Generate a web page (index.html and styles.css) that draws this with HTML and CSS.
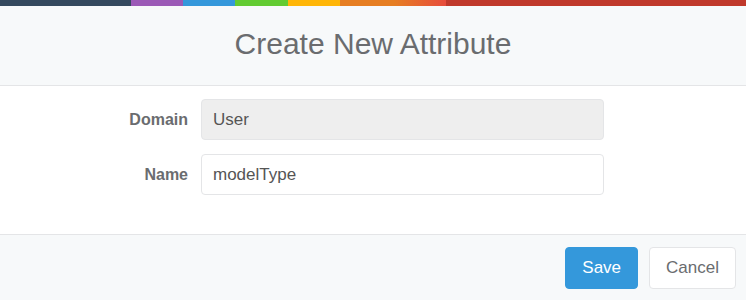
FILE: index.html
```html
<!DOCTYPE html>
<html>
<head>
    <title>Create New Attribute</title>
    <meta name="viewport" content="width=device-width, initial-scale=1">
    <link rel="stylesheet" href="styles.css">
</head>
<body>

<div class="modal">
    <div class="color-line"></div>
    <div class="modal-header">
        <h4 class="modal-title">Create New Attribute</h4>
    </div>
    <div class="modal-body">
        <div class="form-row">
            <label class="form-label">Domain</label>
            <input type="text" class="form-input" value="User" disabled>
        </div>
        <div class="form-row">
            <label class="form-label">Name</label>
            <input type="text" class="form-input" value="modelType">
        </div>
    </div>
    <div class="modal-footer">
        <button class="btn btn-primary">Save</button>
        <button class="btn btn-default">Cancel</button>
    </div>
</div>

</body>
</html>
```

FILE: styles.css
```css
html, body {
    margin: 0px;
    padding: 0px;
    background-color: #ffffff;
    font-family: "Liberation Sans", Arial, sans-serif;
    color: #6a6c6f;
}

.color-line {
    height: 6px;
    background: linear-gradient(to right,
        #34495e 0px, #34495e 131px,
        #9b59b6 131px, #9b59b6 183px,
        #3498db 183px, #3498db 235px,
        #62cb31 235px, #62cb31 288px,
        #ffb606 288px, #ffb606 340px,
        #e67e22 340px, #e67e22 394px,
        #e74c3c 446px,
        #c0392b 446px, #c0392b 100%);
}

.modal-header {
    background-color: #f7f9fa;
    border-bottom: 1px solid #e4e5e7;
    padding: 21px 0px 24px;
    text-align: center;
}

.modal-title {
    margin: 0px;
    font-size: 30px;
    line-height: 34px;
    font-weight: normal;
}

.modal-body {
    padding: 13px 0px 39px;
    display: flex;
    flex-direction: column;
    gap: 14px;
}

.form-row {
    display: flex;
    align-items: center;
}

.form-label {
    width: 188px;
    margin-right: 13px;
    text-align: right;
    font-size: 16px;
    font-weight: bold;
}

.form-input {
    box-sizing: border-box;
    width: 403px;
    height: 41px;
    padding: 0px 11px;
    border: 1px solid #e4e5e7;
    border-radius: 4px;
    background-color: #ffffff;
    font-family: "Liberation Sans", Arial, sans-serif;
    font-size: 17px;
    color: #555555;
    outline: none;
}

.form-input:disabled {
    background-color: #eeeeee;
    color: #555555;
}

.modal-footer {
    background-color: #f7f9fa;
    border-top: 1px solid #e4e5e7;
    padding: 12px 10px 20px;
    display: flex;
    justify-content: flex-end;
    gap: 11px;
}

.btn {
    box-sizing: border-box;
    height: 42px;
    padding: 0px 16px;
    border: 1px solid transparent;
    border-radius: 4px;
    font-family: "Liberation Sans", Arial, sans-serif;
    font-size: 17px;
    cursor: pointer;
}

.btn-primary {
    background-color: #3498db;
    border-color: #3498db;
    color: #ffffff;
}

.btn-default {
    background-color: #ffffff;
    border-color: #e4e5e7;
    color: #6a6c6f;
}
```
